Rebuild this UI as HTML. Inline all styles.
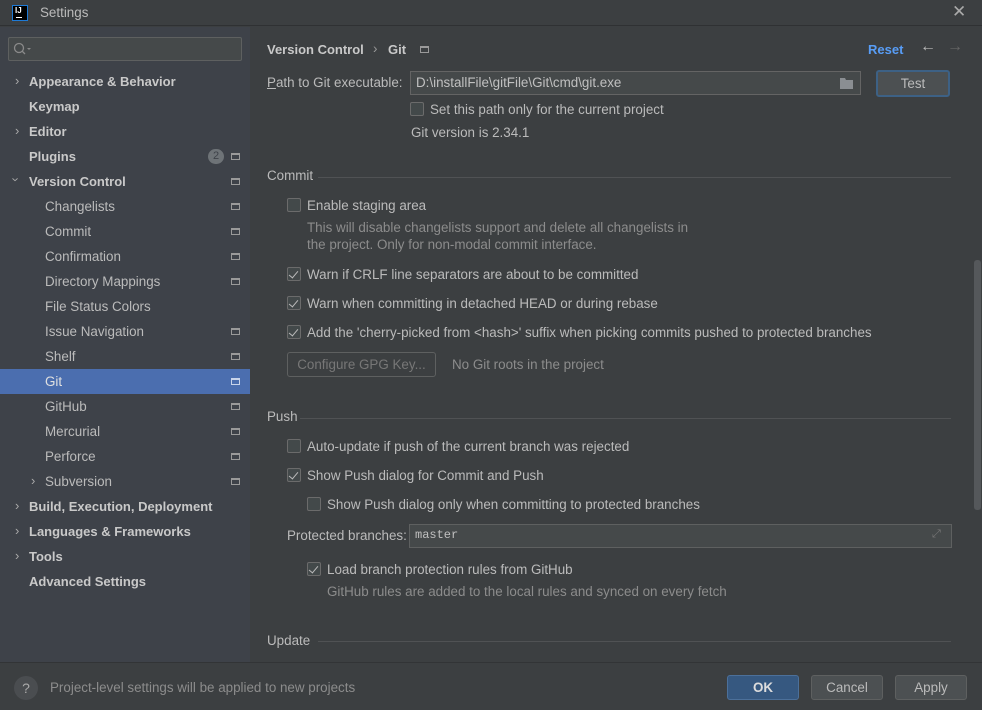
<!DOCTYPE html>
<html><head><meta charset="utf-8"><style>
*{margin:0;padding:0;box-sizing:border-box}
body{width:982px;height:710px;background:#3c3f41;font-family:"Liberation Sans",sans-serif;font-size:13.4px;color:#bbbbbb;position:relative;overflow:hidden}
.a{position:absolute;white-space:nowrap}
#title{left:0;top:0;width:982px;height:26px;background:#3c3f41;border-bottom:1px solid #2f3133}
#side{left:0;top:27px;width:250px;height:635px;background:#3e4249}
#main{left:250px;top:27px;width:732px;height:635px;background:#3c3f41}
#foot{left:0;top:662px;width:982px;height:48px;background:#3c3f41;border-top:1px solid #323436}
.b{font-weight:bold;color:#c9c9c9;font-size:13px}
.ic{width:9px;height:7px;border:1px solid #9a9a9a;border-top-width:2px}
.cb{width:14px;height:14px;border:1px solid #6b6b6b;border-radius:2px;background:#43494a}
.cb.on::after{content:"";position:absolute;left:3px;top:1px;width:4px;height:8px;border:solid #bbb;border-width:0 1.5px 1.5px 0;transform:rotate(40deg)}
.gray{color:#8c8c8c}
.sep{height:1px;background:#505254}
.chev{color:#aaa;font-size:13px}
</style></head><body>
<div class="a" id="title"></div>
<div class="a" style="left:12px;top:5px;width:16px;height:16px;background:#000;border:1px solid #1e7ad6"><div class="a" style="left:2px;top:0;color:#fff;font-size:8px;font-weight:bold">IJ</div><div class="a" style="left:3px;top:11px;width:6px;height:1px;background:#fff"></div></div>
<div class="a" style="left:40px;top:5px;color:#bbb">Settings</div>
<div class="a" style="left:952px;top:2px;font-size:17px;color:#aaa">✕</div>

<div class="a" id="side"></div>
<div class="a" style="left:8px;top:37px;width:234px;height:24px;background:#45494a;border:1px solid #5e6060;border-radius:2px"></div>
<svg class="a" style="left:13px;top:42px" width="20" height="14"><circle cx="6" cy="6" r="4.5" fill="none" stroke="#8a8a8a" stroke-width="1.3"/><line x1="9" y1="9" x2="12" y2="12" stroke="#8a8a8a" stroke-width="1.3"/><path d="M14 6h4l-2 2z" fill="#8a8a8a"/></svg>

<div class="a" style="left:0;top:369px;width:250px;height:25px;background:#4b6eaf"></div>
<div class="a chev" style="left:15px;top:73px">›</div><div class="a b" style="left:29px;top:74px">Appearance &amp; Behavior</div>
<div class="a b" style="left:29px;top:99px">Keymap</div>
<div class="a chev" style="left:15px;top:123px">›</div><div class="a b" style="left:29px;top:124px">Editor</div>
<div class="a b" style="left:29px;top:149px">Plugins</div>
<div class="a" style="left:208px;top:149px;width:16px;height:15px;border-radius:8px;background:#6e7377;color:#3e4249;font-size:11px;text-align:center;line-height:15px">2</div>
<div class="a chev" style="left:14px;top:172px;transform:rotate(90deg)">›</div><div class="a b" style="left:29px;top:174px">Version Control</div>
<div class="a" style="left:45px;top:199px">Changelists</div>
<div class="a" style="left:45px;top:224px">Commit</div>
<div class="a" style="left:45px;top:249px">Confirmation</div>
<div class="a" style="left:45px;top:274px">Directory Mappings</div>
<div class="a" style="left:45px;top:299px">File Status Colors</div>
<div class="a" style="left:45px;top:324px">Issue Navigation</div>
<div class="a" style="left:45px;top:349px">Shelf</div>
<div class="a" style="left:45px;top:374px;color:#e0e0e0">Git</div>
<div class="a" style="left:45px;top:399px">GitHub</div>
<div class="a" style="left:45px;top:424px">Mercurial</div>
<div class="a" style="left:45px;top:449px">Perforce</div>
<div class="a chev" style="left:31px;top:473px">›</div><div class="a" style="left:45px;top:474px">Subversion</div>
<div class="a chev" style="left:15px;top:498px">›</div><div class="a b" style="left:29px;top:499px">Build, Execution, Deployment</div>
<div class="a chev" style="left:15px;top:523px">›</div><div class="a b" style="left:29px;top:524px">Languages &amp; Frameworks</div>
<div class="a chev" style="left:15px;top:548px">›</div><div class="a b" style="left:29px;top:549px">Tools</div>
<div class="a b" style="left:29px;top:574px">Advanced Settings</div>
<div class="a ic" style="left:231px;top:153px"></div>
<div class="a ic" style="left:231px;top:178px"></div>
<div class="a ic" style="left:231px;top:203px"></div>
<div class="a ic" style="left:231px;top:228px"></div>
<div class="a ic" style="left:231px;top:253px"></div>
<div class="a ic" style="left:231px;top:278px"></div>
<div class="a ic" style="left:231px;top:328px"></div>
<div class="a ic" style="left:231px;top:353px"></div>
<div class="a ic" style="left:231px;top:378px;border-color:#c8d4ea"></div>
<div class="a ic" style="left:231px;top:403px"></div>
<div class="a ic" style="left:231px;top:428px"></div>
<div class="a ic" style="left:231px;top:453px"></div>
<div class="a ic" style="left:231px;top:478px"></div>

<div class="a" id="main"></div>
<div class="a b" style="left:267px;top:42px">Version Control</div>
<div class="a" style="left:373px;top:41px;color:#999">›</div>
<div class="a b" style="left:388px;top:42px">Git</div>
<div class="a ic" style="left:420px;top:46px"></div>
<div class="a" style="left:868px;top:42px;color:#589df6;font-weight:bold;font-size:13px">Reset</div>
<div class="a" style="left:920px;top:38px;color:#bbb;font-size:16px">←</div>
<div class="a" style="left:947px;top:38px;color:#666;font-size:16px">→</div>
<div class="a" style="left:974px;top:260px;width:7px;height:250px;background:#55585b;border-radius:3px"></div>

<div class="a" style="left:267px;top:75px"><u>P</u>ath to Git executable:</div>
<div class="a" style="left:410px;top:71px;width:451px;height:24px;background:#45494a;border:1px solid #646464"></div>
<div class="a" style="left:416px;top:75px;color:#c0c0c0">D:\installFile\gitFile\Git\cmd\git.exe</div>
<svg class="a" style="left:840px;top:77px" width="14" height="12"><path d="M0 1h5l1 2h7v9H0z" fill="#8a8e92"/></svg>
<div class="a" style="left:876px;top:70px;width:74px;height:27px;border:2px solid #3d6185;border-radius:3px;background:#4c5052;text-align:center;line-height:23px">Test</div>
<div class="a cb" style="left:410px;top:102px"></div>
<div class="a" style="left:430px;top:102px">Set this path only for the current project</div>
<div class="a" style="left:411px;top:125px">Git version is 2.34.1</div>

<div class="a" style="left:267px;top:168px">Commit</div>
<div class="a sep" style="left:318px;top:177px;width:633px"></div>
<div class="a cb" style="left:287px;top:198px"></div>
<div class="a" style="left:307px;top:198px">Enable staging area</div>
<div class="a gray" style="left:307px;top:220px">This will disable changelists support and delete all changelists in</div>
<div class="a gray" style="left:307px;top:237px">the project. Only for non-modal commit interface.</div>
<div class="a cb on" style="left:287px;top:267px"></div>
<div class="a" style="left:307px;top:267px">Warn if CRLF line separators are about to be committed</div>
<div class="a cb on" style="left:287px;top:296px"></div>
<div class="a" style="left:307px;top:296px">Warn when committing in detached HEAD or during rebase</div>
<div class="a cb on" style="left:287px;top:325px"></div>
<div class="a" style="left:307px;top:325px">Add the 'cherry-picked from &lt;hash&gt;' suffix when picking commits pushed to protected branches</div>
<div class="a" style="left:287px;top:352px;width:149px;height:25px;border:1px solid #5e6060;border-radius:3px;color:#777;text-align:center;line-height:23px">Configure GPG Key...</div>
<div class="a gray" style="left:452px;top:357px">No Git roots in the project</div>

<div class="a" style="left:267px;top:409px">Push</div>
<div class="a sep" style="left:300px;top:418px;width:651px"></div>
<div class="a cb" style="left:287px;top:439px"></div>
<div class="a" style="left:307px;top:439px">Auto-update if push of the current branch was rejected</div>
<div class="a cb on" style="left:287px;top:468px"></div>
<div class="a" style="left:307px;top:468px">Show Push dialog for Commit and Push</div>
<div class="a cb" style="left:307px;top:497px"></div>
<div class="a" style="left:327px;top:497px">Show Push dialog only when committing to protected branches</div>
<div class="a" style="left:287px;top:528px">Protected branches:</div>
<div class="a" style="left:409px;top:524px;width:543px;height:24px;background:#45494a;border:1px solid #5e6060"></div>
<div class="a" style="left:415px;top:528px;font-family:'Liberation Mono',monospace;font-size:12px;color:#c0c0c0">master</div>
<div class="a" style="left:932px;top:528px;color:#777;font-size:11px">⤢</div>
<div class="a cb on" style="left:307px;top:562px"></div>
<div class="a" style="left:327px;top:562px">Load branch protection rules from GitHub</div>
<div class="a gray" style="left:327px;top:584px">GitHub rules are added to the local rules and synced on every fetch</div>

<div class="a" style="left:267px;top:633px">Update</div>
<div class="a sep" style="left:318px;top:641px;width:633px"></div>

<div class="a" id="foot"></div>
<div class="a" style="left:14px;top:676px;width:24px;height:24px;border-radius:12px;background:#4a4d50;color:#aaa;text-align:center;line-height:24px;font-size:14px">?</div>
<div class="a gray" style="left:50px;top:680px">Project-level settings will be applied to new projects</div>
<div class="a" style="left:727px;top:675px;width:72px;height:25px;background:#365880;border:1px solid #4c709a;border-radius:3px;color:#ddd;font-weight:bold;text-align:center;line-height:23px">OK</div>
<div class="a" style="left:811px;top:675px;width:72px;height:25px;background:#4c5052;border:1px solid #5e6060;border-radius:3px;text-align:center;line-height:23px">Cancel</div>
<div class="a" style="left:895px;top:675px;width:72px;height:25px;background:#4c5052;border:1px solid #5e6060;border-radius:3px;text-align:center;line-height:23px">Apply</div>
</body></html>
